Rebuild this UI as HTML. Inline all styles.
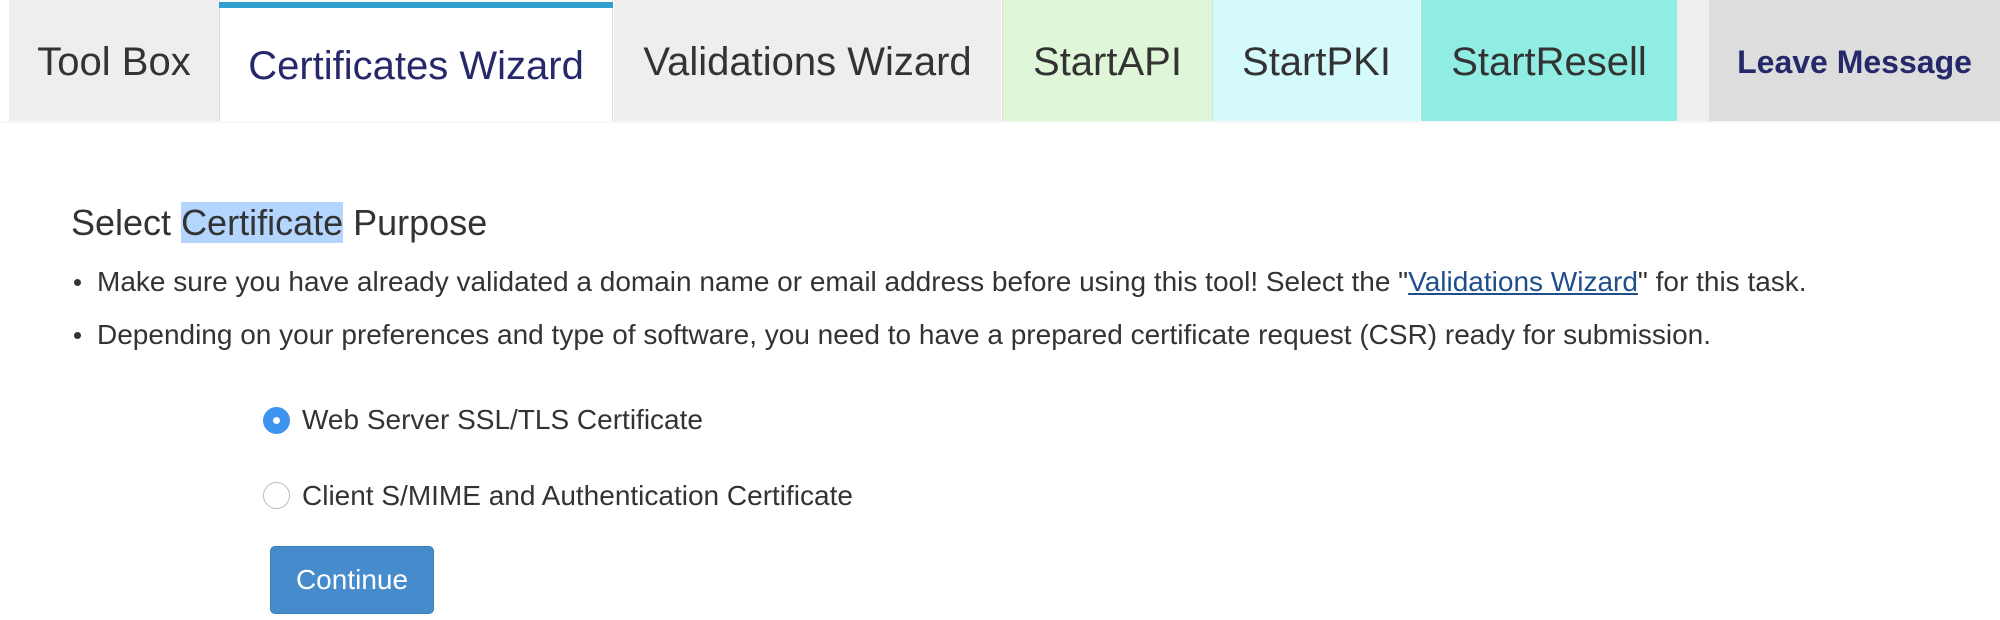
<!DOCTYPE html>
<html><head><meta charset="utf-8"><style>
*{margin:0;padding:0;box-sizing:border-box}
body{width:2000px;height:620px;background:#fff;font-family:"Liberation Sans",Arial,sans-serif;position:relative;overflow:hidden;color:#333}
.tab{position:absolute;top:0;height:121px;display:flex;align-items:center;justify-content:center;font-size:40px;color:#333;padding-top:4px}
.hl{background:#b4d5fe}
a{color:#1f4e8c;text-decoration:underline}
li{position:absolute;left:97px;font-size:28px;list-style:none;white-space:nowrap}
li:before{content:"";position:absolute;left:-23px;top:13px;width:7px;height:7px;border-radius:50%;background:#333}
.radio{position:absolute;left:263px;width:27px;height:27px;border-radius:50%}
.rl{position:absolute;left:302px;font-size:28px;color:#333;white-space:nowrap}
</style></head><body>
<div style="position:absolute;left:0;top:121px;width:2000px;height:2px;background:#f7f7f7"></div>
<div class="tab" style="left:9px;width:210px;background:#eeeeee">Tool Box</div>
<div class="tab" style="left:219px;width:394px;background:#fff;border-left:1px solid #ddd;border-right:1px solid #ddd;color:#25296a;padding-top:12px">Certificates Wizard</div>
<div style="position:absolute;left:219px;top:2px;width:394px;height:6px;background:#2f9fd0"></div>
<div class="tab" style="left:614px;width:387px;background:#eeeeee">Validations Wizard</div>
<div class="tab" style="left:1002px;width:210px;background:#dff7d8;border-left:1px solid #ddd">StartAPI</div>
<div class="tab" style="left:1212px;width:208px;background:#d5fafc;border-left:1px solid #ddd">StartPKI</div>
<div class="tab" style="left:1421px;width:256px;background:#8fede3">StartResell</div>
<div class="tab" style="left:1677px;width:32px;background:#eeeeee"></div>
<div class="tab" style="left:1709px;width:291px;background:#dddddd;color:#25296a;font-weight:bold;font-size:32px">Leave Message</div>

<div style="position:absolute;left:71px;top:202px;font-size:36px;color:#333;white-space:nowrap">Select <span class="hl">Certificate</span> Purpose</div>
<ul>
<li style="top:266px">Make sure you have already validated a domain name or email address before using this tool! Select the "<a>Validations Wizard</a>" for this task.</li>
<li style="top:319px">Depending on your preferences and type of software, you need to have a prepared certificate request (CSR) ready for submission.</li>
</ul>
<div class="radio" style="top:407px;background:#3d94f0"><div style="position:absolute;left:10px;top:10px;width:7px;height:7px;border-radius:50%;background:#fff"></div></div>
<div class="rl" style="top:404px">Web Server SSL/TLS Certificate</div>
<div class="radio" style="top:482px;border:1px solid #bbb;background:#fff"></div>
<div class="rl" style="top:480px">Client S/MIME and Authentication Certificate</div>
<div style="position:absolute;left:270px;top:546px;width:164px;height:68px;background:#468bcb;border:1px solid #3a7cba;border-radius:5px;color:#fff;font-size:28px;display:flex;align-items:center;justify-content:center">Continue</div>
</body></html>
